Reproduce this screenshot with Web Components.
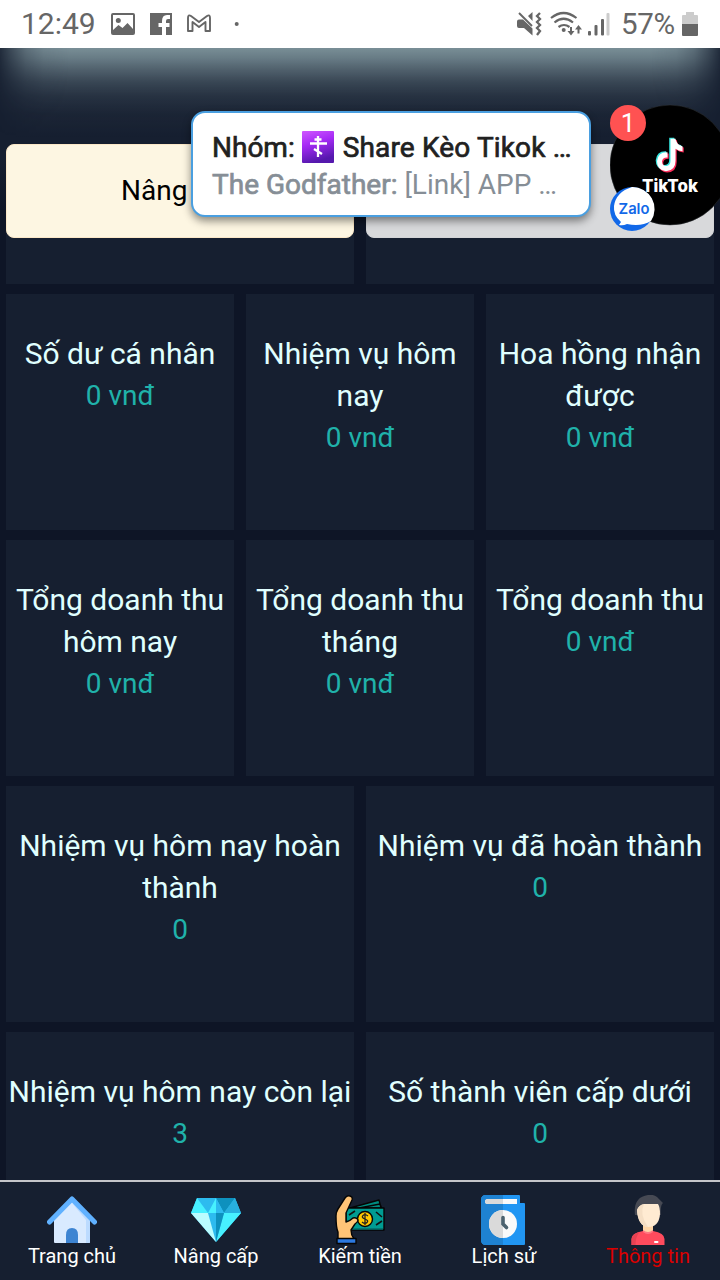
<!DOCTYPE html>
<html lang="vi">
<head>
<meta charset="utf-8">
<title>Thông tin</title>
<style>
  body { margin: 0; background: #0e1526; font-family: Roboto, "Noto Sans", sans-serif; }
</style>
</head>
<body>
<app-screen></app-screen>
<script>
const define = (name, html) => {
  const t = document.createElement('template');
  t.innerHTML = html;
  customElements.define(name, class extends HTMLElement {
    constructor() {
      super();
      this.attachShadow({ mode: 'open' }).appendChild(t.content.cloneNode(true));
    }
  });
};

define('status-bar', `
<style>
  :host { display: flex; box-sizing: border-box; height: 48px; background: #fff; color: #666; font-size: 30px; line-height: 50px; justify-content: space-between; padding: 0 20px 0 21px; flex: none; }
  div { display: flex; align-items: center; }
  svg { display: block; flex: none; }
  .time { width: 90px; letter-spacing: 0; }
  .pct { width: 60px; letter-spacing: -.3px; font-size: 29.5px; }
</style>
<div>
  <span class="time">12:49</span>
  <svg width="130" height="48" viewBox="111 0 130 48" fill="#666">
    <path fill-rule="evenodd" d="M113 13h20q2 0 2 2v18q0 2-2 2h-20q-2 0-2-2v-18q0-2 2-2zM113 15v15l5.500-5 4 3 5-5 5.500 6v-14z"/><circle cx="118.300" cy="20.500" r="2.500"/>
    <path d="M150 13h22v22h-6v-8h3.500v-4h-3.500v-2q0-2 2-2h2v-4h-3q-5 0-5 6v2h-3.500v4h3.500v8h-12z"/>
    <path d="M188 29.500V18q0-4 3-2l8 6 8-6q3-2 3 2v13h-4.500V22l-6.500 5-6.500-5v9H188z" fill="none" stroke="#666" stroke-width="1.900" stroke-linejoin="round"/>
    <circle cx="236.700" cy="24" r="2"/>
  </svg>
</div>
<div>
  <svg width="104" height="48" viewBox="518 0 104 48" fill="#666">
    <path d="M518 21.500q0-2 2-2h4l9.500 9v7L525 28h-5q-2 0-2-2zM529 16l4.500-4v9z"/>
    <path d="M520 13l13 13" stroke="#666" stroke-width="2"/>
    <path d="M541 13l-3 3 3 3-3 3 3 3-3 3 3 3-3 4" fill="none" stroke="#666" stroke-width="2.300"/>
    <g fill="none" stroke="#666" stroke-width="2.200"><path d="M552 18q12.500-10 25.500 0M555.500 22.500q9-7.500 18.500 0M559.500 27q5.500-4 11 0"/></g>
    <circle cx="564.700" cy="30" r="2"/>
    <path d="M571 27h2v4h2.500l-3.500 4.500-3.500-4.500h2.500zM578.500 33.500h2v-4h2.500l-3.500-4.500-3.500 4.500h2.500z"/>
    <rect x="589" y="31" width="3" height="4.500" rx="1"/><rect x="595.500" y="25" width="3" height="10.500" rx="1"/><rect x="602" y="19" width="3" height="16.500" rx="1"/><rect x="607.500" y="13" width="3" height="22.500" rx="1" fill="#ccc"/>
  </svg>
  <span class="pct">57%</span>
  <svg width="19" height="48" viewBox="682 0 19 48"><path d="M684 15h3v-3h8v3h3q1 0 1 1v8h-16v-8q0-1 1-1z" fill="#ccc"/><path d="M683 24h16v11q0 1-1 1h-14q-1 0-1-1z" fill="#666"/></svg>
</div>`);

define('stat-row', `
<style>
  :host { display: grid; grid-auto-flow: column; grid-auto-columns: minmax(0, 1fr); column-gap: 12px; height: 236px; flex: none; position: relative; }
</style><slot></slot>`);

define('stat-card', `
<style>
  :host { display: block; box-sizing: border-box; background: #161f30; color: #e0ffff; text-align: center; font-size: 30px; line-height: 42px; padding-top: 39px; white-space: nowrap; }
  .label { white-space: normal; margin: 0 1px; }
  .value { color: #20b2aa; font-size: 28px; }
</style>
<div class="label"><slot></slot></div><div class="value"><slot name="value"></slot></div>`);

define('action-card', `
<style>
  :host { display: flex; align-items: flex-start; background: linear-gradient(transparent 160px, #161f30 160px); }
  .btn { flex: 1; box-sizing: border-box; height: 94px; margin-top: 96px; border-radius: 8px; border: 1px solid var(--edge); background: var(--fill); color: #000; display: flex; align-items: center; padding: 0 0 2px 114px; font-size: 28px; }
</style>
<div class="btn"><slot></slot></div>`);

define('zalo-toast', `
<style>
  :host { position: absolute; left: 191px; top: 111px; width: 400px; height: 106px; box-sizing: border-box; border: 2px solid #4a9fe0; border-radius: 14px; background: #fff; box-shadow: 0 4px 9px rgba(0,0,0,.45); padding: 16px 0 0 19px; white-space: nowrap; }
  .title, .msg { display: flex; align-items: center; height: 37px; font-size: 28px; }
  .title { color: #212121; -webkit-text-stroke: .7px #212121; }
  .title span:last-child { letter-spacing: .15px; }
  .msg { color: #868e96; }
  b { font-weight: 400; -webkit-text-stroke: .7px #868e96; margin-right: 7px; }
  svg { margin: -2px 9px 0 7px; flex: none; }
</style>
<div class="title"><span>Nhóm:</span>
<svg width="32" height="32" viewBox="0 0 32 32"><defs><linearGradient id="p" x1="0" y1="0" x2=".3" y2="1"><stop offset="0" stop-color="#d057ff"/><stop offset=".45" stop-color="#a52af5"/><stop offset="1" stop-color="#5518ad"/></linearGradient></defs><rect width="32" height="32" rx="1" fill="url(#p)"/><path d="M16 5v21M12.500 8.500h7M8 12.500h17M12 18l8 5" stroke="#fff" stroke-width="2.300" fill="none"/></svg>
<span>Share Kèo Tikok …</span></div>
<div class="msg"><b>The Godfather:</b><span>[Link] APP …</span></div>`);

define('chat-head', `
<style>
  :host { position: absolute; left: 610px; top: 104px; width: 110px; height: 130px; overflow: hidden; }
  svg { display: block; }
  .count { font-family: Roboto, sans-serif; }
  .brand { font-family: Inter, sans-serif; }
</style>
<svg width="110" height="130" viewBox="610 104 110 130">
  <defs><path id="note" d="M669.500 138.500h5q.8 6 7 7.500v5q-4-.3-7-2.500v12q0 10-9.500 10.500-9-1-9-10 1-9.500 10.500-9v5.200q-5-.3-5.500 4 .2 4.500 4.300 4.600 4.200-.4 4.200-5.300z"/></defs>
  <circle cx="670" cy="165" r="60" fill="#000" stroke="#35383d" stroke-width=".5"/>
  <use href="#note" x="-.3" y="-.8" fill="#35e5df"/><use href="#note" x="2.200" y="1.500" fill="#fa2c58"/><use href="#note" x="1" y=".3" fill="#fff"/>
  <text class="brand" x="642" y="191.500" font-size="17.500" font-weight="800" fill="#fff" textLength="56" lengthAdjust="spacingAndGlyphs">TikTok</text>
  <circle cx="628" cy="123" r="18" fill="#ff5252"/>
  <text class="count" x="628" y="132" text-anchor="middle" font-size="26" fill="#fff">1</text>
  <circle cx="632" cy="209" r="22" fill="#1268e8"/>
  <path d="M632 187a22 22 0 0 1 19 34q-10 6-24 3-4 2-8 1l2-3q-8-7-7-16 2-14 18-19z" fill="#fff"/>
  <text class="brand" x="618.500" y="213.800" font-size="15" font-weight="600" fill="#1268e8" textLength="31" lengthAdjust="spacingAndGlyphs">Zalo</text>
</svg>`);

define('nav-item', `
<style>
  :host { display: flex; flex-direction: column; align-items: center; flex: 1 1 0; padding-top: 13px; color: var(--label, #fff); font-size: 20px; line-height: 24px; white-space: nowrap; }
  .icon { height: 50px; margin-bottom: -1px; }
</style>
<div class="icon"><slot name="icon"></slot></div><div><slot></slot></div>`);

define('bottom-nav', `
<style>
  :host { display: flex; position: absolute; left: 0; right: 0; bottom: 0; height: 100px; box-sizing: border-box; border-top: 2px solid #c4c5c9; background: #161f30; }
  svg { display: block; }
</style>
<nav-item>Trang chủ
  <svg slot="icon" width="50" height="50" viewBox="0 0 50 50"><path d="M7 22L25 6l18 16v25q0 1-1 1H8q-1 0-1-1z" fill="#d9eaff"/><path d="M25 8l18 14v25q0 1-1 1h-3V25z" fill="#bcdbff"/><path d="M19 48V40q0-7 6-7t6 7v8z" fill="#3d84d2"/><path d="M2.500 27L25 4l22.500 23" fill="none" stroke="#60b1ff" stroke-width="5" stroke-linecap="round" stroke-linejoin="round"/></svg></nav-item>
<nav-item>Nâng cấp
  <svg slot="icon" width="50" height="50" viewBox="0 0 50 50"><path d="M6 3h38l6 15-25 29L0 18z" fill="#2dbbef"/><path d="M6 3L0 18h17z" fill="#47f1ff"/><path d="M25 3v15h-8zM33 18h17L25 47z" fill="#47f1ff"/><path d="M25 3h19L33 18z" fill="#0e91be"/><path d="M25 18V3l8 15z" fill="#2dbbef"/><path d="M44 3l6 15H33z" fill="#28b0df"/><path d="M0 18h17l8 29z" fill="#bafcff"/><path d="M25 18h8l-8 29z" fill="#0e91be"/></svg></nav-item>
<nav-item>Kiếm tiền
  <svg slot="icon" width="50" height="50" viewBox="0 0 50 50"><g stroke="#050505" stroke-width="1.400" stroke-linejoin="round"><path d="M15 13L44 5l2 8zM24 13l21-4 2 5z" fill="#008c80"/><rect x="11" y="13" width="38" height="22" fill="#009c92"/><path d="M12 34h36" stroke="#036b68"/><circle cx="30" cy="24" r="7.500" fill="#ffc800"/><path d="M3 44V37q-2-4-2-16 0-4 2-7L10 3q2-3 5-2 3 1 2 4l-6 13v9q4-1 7-4 4-1 5 2 0 2-3 4l-4 6q0 5 3 9z" fill="#ffc477"/><rect x="2" y="43.500" width="19" height="5" fill="#2c79e0"/></g><path d="M14 20l6-4M41 17l6 5M41 30l6-4" stroke="#111" stroke-width="1.600"/><path d="M33 21q-3-2.500-5-.5t2 3.500 2 3.500-5-.5M30 18v12" fill="none" stroke="#222" stroke-width="1.300"/></svg></nav-item>
<nav-item>Lịch sử
  <svg slot="icon" width="50" height="50" viewBox="1 0 50 50"><path d="M8 0h33q1 0 1 1v7h4q1 0 1 1v40q0 1-1 1H8q-5 0-5-5V5q0-5 5-5z" fill="#2196f3"/><path d="M8 0h17v50H8q-5 0-5-5V5q0-5 5-5z" fill="#1e82d2"/><path d="M10 4h29v5H10q-3 0-3-2.500T10 4z" fill="#fafafa"/><path d="M10 4h15v5H10q-3 0-3-2.500T10 4z" fill="#dadada"/><circle cx="25" cy="29" r="14" fill="#fafafa"/><path d="M25 15a14 14 0 0 0 0 28z" fill="#dadada"/><path d="M25 22.500V29l3.500 3.500" fill="none" stroke="#4c626e" stroke-width="3.600" stroke-linecap="round"/></svg></nav-item>
<nav-item style="--label:#dc0000">Thông tin
  <svg slot="icon" width="50" height="50" viewBox="0 0 50 50"><path d="M12 20q-2-18 13-20 5-1 9 2l6 6q-3 2-2 12z" fill="#464953"/><path d="M20 30h10v7q-5 4-10 0z" fill="#ffd6a6"/><path d="M14 15q2-5 7-6h14q2 3 2 10-1 13-12 13-10-1-11-17z" fill="#ffebd2"/><path d="M14 15q2-5 7-6-5 10 4 23-10-1-11-17z" fill="#f5dfc5"/><path d="M8.500 50v-6q0-6 11.500-8 5 4 10 0 11.500 2 11.500 8v6z" fill="#ff4b5d"/><path d="M8.500 50v-6q0-5 8-7-4 5-4 13z" fill="#e84253"/><path d="M20 35q5 4 10 0v2q-5 4-10 0z" fill="#ff7883"/><rect x="31" y="46" width="4.500" height="2" rx="1" fill="#fff"/></svg></nav-item>`);

define('app-screen', `
<style>
  :host { display: flex; flex-direction: column; position: relative; width: 720px; height: 1280px; overflow: hidden; background: #0e1526; }
  main { position: relative; flex: 1; min-height: 0; overflow: hidden; padding: 0 6px; display: flex; flex-direction: column; gap: 10px; background: linear-gradient(#161f30 110px, #0e1526 162px); }
  main::before { content: ""; position: absolute; inset: 0 0 auto; height: 90px;
    background: linear-gradient(rgba(125,147,155,.96), rgba(125,147,155,.8) 10px, rgba(125,147,155,.56) 22px, rgba(125,147,155,.34) 34px, rgba(125,147,155,.17) 48px, rgba(125,147,155,.05) 66px, rgba(125,147,155,0) 90px);
    -webkit-mask-image: linear-gradient(90deg, rgba(0,0,0,.12), rgba(0,0,0,.42) 12px, rgba(0,0,0,.72) 26px, rgba(0,0,0,.92) 44px, #000 70px, #000 650px, rgba(0,0,0,.92) 676px, rgba(0,0,0,.72) 694px, rgba(0,0,0,.42) 708px, rgba(0,0,0,.12)); }
</style>
<status-bar></status-bar>
<main>
  <stat-row><action-card style="--fill:#fdf6e2;--edge:#fbe8c8">Nâng</action-card><action-card style="--fill:#d8d9db;--edge:#d3d4d6"></action-card></stat-row>
  <stat-row><stat-card>Số dư cá nhân<span slot="value">0 vnđ</span></stat-card><stat-card>Nhiệm vụ hôm nay<span slot="value">0 vnđ</span></stat-card><stat-card>Hoa hồng nhận được<span slot="value">0 vnđ</span></stat-card></stat-row>
  <stat-row><stat-card>Tổng doanh thu hôm nay<span slot="value">0 vnđ</span></stat-card><stat-card>Tổng doanh thu tháng<span slot="value">0 vnđ</span></stat-card><stat-card>Tổng doanh thu<span slot="value">0 vnđ</span></stat-card></stat-row>
  <stat-row><stat-card>Nhiệm vụ hôm nay hoàn thành<span slot="value">0</span></stat-card><stat-card>Nhiệm vụ đã hoàn thành<span slot="value">0</span></stat-card></stat-row>
  <stat-row><stat-card>Nhiệm vụ hôm nay còn lại<span slot="value">3</span></stat-card><stat-card>Số thành viên cấp dưới<span slot="value">0</span></stat-card></stat-row>
</main>
<bottom-nav></bottom-nav>
<zalo-toast></zalo-toast>
<chat-head></chat-head>`);
</script>
</body>
</html>
